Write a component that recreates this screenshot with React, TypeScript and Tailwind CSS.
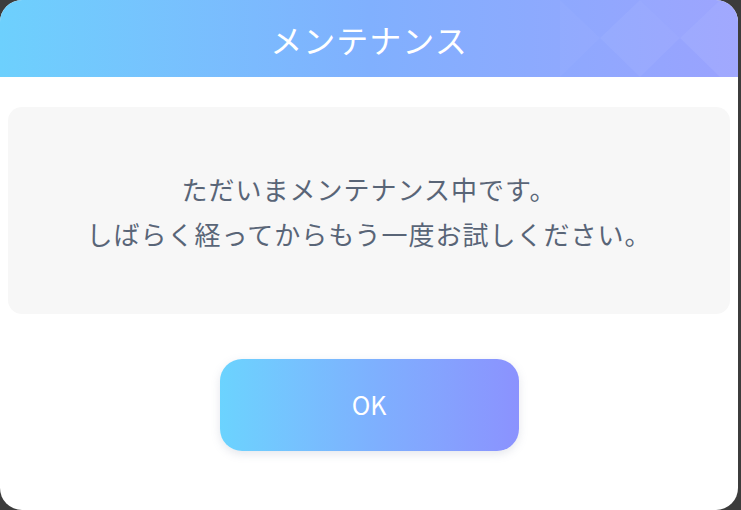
import React from 'react';

const jpFont = { fontFamily: '"Noto Sans CJK JP", "Noto Sans", sans-serif' };

// faint diamond pattern on the right end of the header band
const HeaderPattern: React.FC = () => (
  <svg
    className="absolute right-0 top-0 h-full"
    width="200"
    height="77"
    viewBox="0 0 200 77"
    preserveAspectRatio="none"
  >
    <polygon points="22,0 62,38 22,77" fill="#ffffff" fillOpacity="0.03" />
    <polygon points="62,38 102,0 142,38 102,77" fill="#ffffff" fillOpacity="0.05" />
    <polygon points="142,38 182,0 200,0 200,77 182,77" fill="#ffffff" fillOpacity="0.07" />
    <polygon points="102,0 142,38 182,0" fill="#ffffff" fillOpacity="0.03" />
  </svg>
);

const App: React.FC = () => {
  return (
    <div className="w-[741px] h-[510px] bg-[#3c3c3c] overflow-hidden" style={jpFont}>
      <div className="w-[738px] h-[510px] bg-white rounded-[22px] overflow-hidden flex flex-col">
        {/* Header */}
        <div className="relative h-[77px] shrink-0 flex items-center justify-center bg-gradient-to-r from-[#6dd0fd] via-[#80b0fe] to-[#9aa2fe]">
          <HeaderPattern />
          <h1 className="relative text-white text-[32px] leading-none tracking-[1px]">メンテナンス</h1>
        </div>

        {/* Message */}
        <div className="px-[8px] pt-[30px]">
          <div className="h-[207px] rounded-[14px] bg-[#f7f7f7] flex flex-col items-center justify-center text-[#596577] text-[26px] leading-[45px] tracking-[1px]">
            <p>ただいまメンテナンス中です。</p>
            <p>しばらく経ってからもう一度お試しください。</p>
          </div>
        </div>

        {/* Action */}
        <div className="flex justify-center pt-[45px]">
          <button className="w-[299px] h-[92px] rounded-[22px] bg-gradient-to-r from-[#6bd3fe] via-[#7db1fe] to-[#8b92fe] text-white text-[25px] shadow-[0_3px_10px_rgba(120,130,160,0.2)]">
            OK
          </button>
        </div>
      </div>
    </div>
  );
};

export default App;
